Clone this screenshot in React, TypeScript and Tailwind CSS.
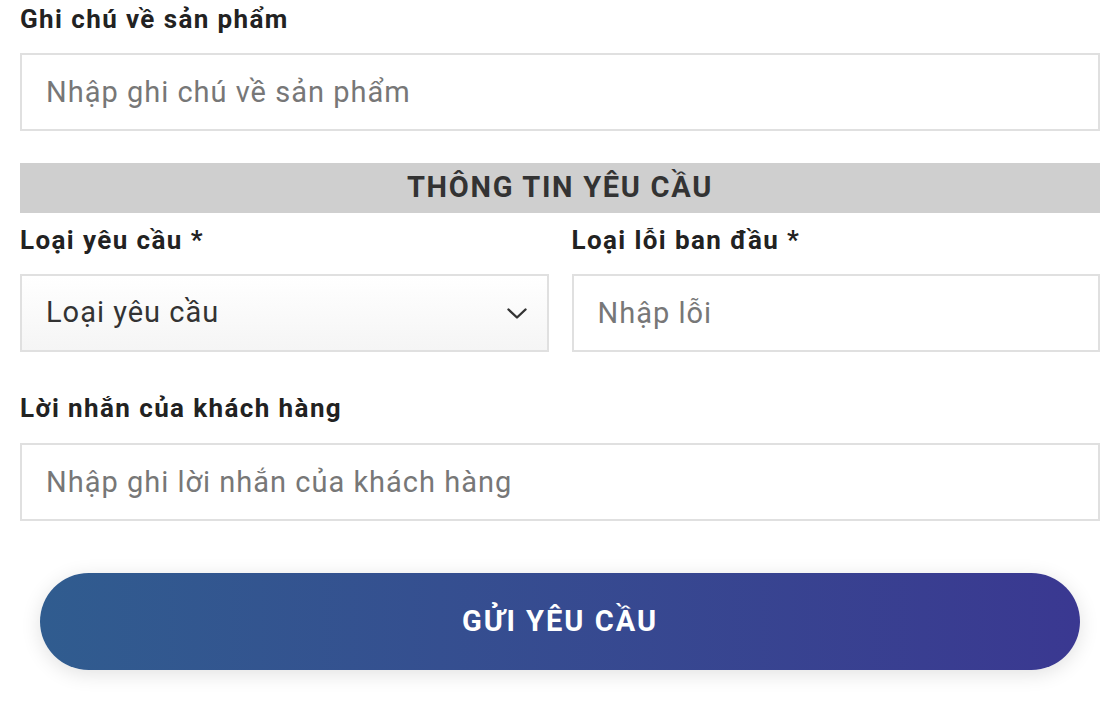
import React from 'react';

function Label({ children }: { children: React.ReactNode }) {
  return (
    <label className="block text-[26px] leading-[30px] font-bold tracking-[1.4px] text-[#222]">
      {children}
    </label>
  );
}

function TextInput({ placeholder }: { placeholder: string }) {
  return (
    <input
      type="text"
      placeholder={placeholder}
      className="w-full h-[78px] border-2 border-[#e0e0e0] bg-white px-[24px] text-[29px] tracking-[1px] text-[#333] placeholder-[#777] outline-none"
    />
  );
}

export default function App() {
  return (
    <div className="w-[1110px] h-[722px] bg-white pl-[20px] pr-[10px] pt-[4px] font-['Roboto',sans-serif] overflow-hidden">
      {/* product note */}
      <Label>Ghi chú về sản phẩm</Label>
      <div className="mt-[19px]">
        <TextInput placeholder="Nhập ghi chú về sản phẩm" />
      </div>

      {/* section header */}
      <div className="mt-[32px] h-[50px] bg-[#cfcfcf] flex items-center justify-center">
        <span className="text-[29px] font-bold tracking-[1.7px] text-[#333]">THÔNG TIN YÊU CẦU</span>
      </div>

      <div className="mt-[12px] grid grid-cols-2 gap-[23px]">
        <div>
          <Label>Loại yêu cầu *</Label>
          <div className="mt-[19px]">
            <div className="w-full h-[78px] border-2 border-[#e0e0e0] bg-gradient-to-b from-white to-[#f5f5f5] pl-[24px] pr-[20px] flex items-center justify-between text-[29px] tracking-[1px] text-[#333]">
              <span>Loại yêu cầu</span>
              <svg width="20" height="11" viewBox="0 0 20 11" fill="none">
                <polyline points="1.5,1.5 10,9.5 18.5,1.5" stroke="#333" strokeWidth="2.4" strokeLinecap="round" strokeLinejoin="round" />
              </svg>
            </div>
          </div>
        </div>
        <div>
          <Label>Loại lỗi ban đầu *</Label>
          <div className="mt-[19px]">
            <TextInput placeholder="Nhập lỗi" />
          </div>
        </div>
      </div>

      <div className="mt-[41px]">
        <Label>Lời nhắn của khách hàng</Label>
        <div className="mt-[20px]">
          <TextInput placeholder="Nhập ghi lời nhắn của khách hàng" />
        </div>
      </div>

      <div className="mt-[52px] px-[20px]">
        <button className="w-full h-[97px] rounded-full bg-gradient-to-r from-[#305c8f] to-[#3a3891] text-white text-[29px] font-bold tracking-[2px] shadow-[0_4px_20px_rgba(0,0,0,0.12)]">
          GỬI YÊU CẦU
        </button>
      </div>
    </div>
  );
}
